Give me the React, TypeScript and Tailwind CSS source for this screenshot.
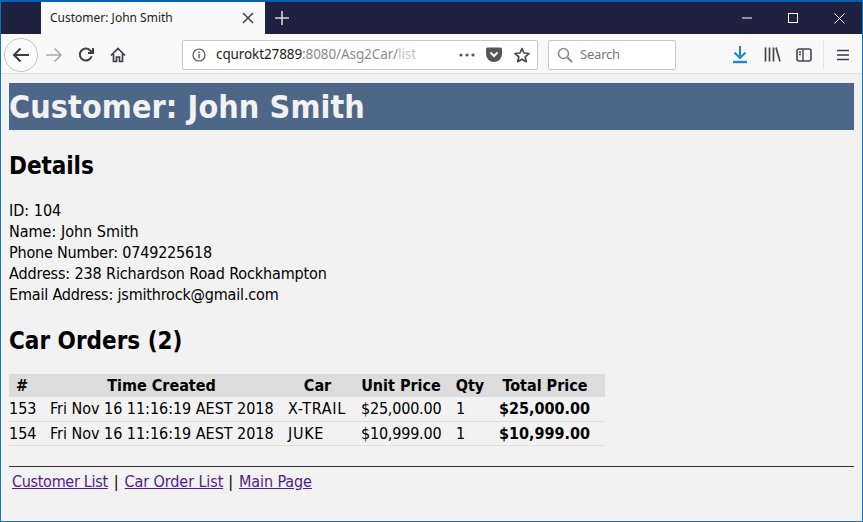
import React from "react";

const uiFont = "font-['Noto_Sans','Open_Sans',sans-serif]";

function Icon({ children, className = "", w = 20, h = 20 }: { children: React.ReactNode; className?: string; w?: number; h?: number }) {
  return (
    <svg width={w} height={h} viewBox={`0 0 ${w} ${h}`} fill="none" stroke="currentColor" strokeWidth={2} className={className}>
      {children}
    </svg>
  );
}

const rows = [
  ["153", "Fri Nov 16 11:16:19 AEST 2018", "X-TRAIL", "$25,000.00", "1", "$25,000.00"],
  ["154", "Fri Nov 16 11:16:19 AEST 2018", "JUKE", "$10,999.00", "1", "$10,999.00"],
];

export default function App() {
  return (
    <div className="w-[863px] h-[522px] overflow-hidden flex flex-col bg-[#f2f2f2] border-x border-b border-t-2 border-x-[#1473b8] border-b-[#2f7296] border-t-[#0b5fb0]">
      {/* title bar */}
      <div className="h-[32px] shrink-0 bg-[#1e2140] flex items-stretch text-white">
        <div className="w-[40px]" />
        <div className={`w-[224px] bg-[#f9f9fa] flex items-center pl-[9px] pr-[10px] text-[#222] text-[12px] ${uiFont}`}>
          <span className="flex-1">Customer: John Smith</span>
          <Icon w={12} h={12} className="text-[#444] -translate-x-px">
            <path d="M1 1L11 11M11 1L1 11" strokeWidth={1.6} />
          </Icon>
        </div>
        <div className="w-[34px] flex items-center justify-center text-[#d5d5dc]">
          <Icon w={14} h={14}>
            <path d="M7 0V14M0 7H14" strokeWidth={1.6} />
          </Icon>
        </div>
        <div className="flex-1" />
        <div className="flex items-center justify-center w-[46px] text-white">
          <Icon w={10} h={10}><path d="M0 5H10" strokeWidth={1} /></Icon>
        </div>
        <div className="flex items-center justify-center w-[46px] text-white">
          <Icon w={10} h={10}><rect x="0.5" y="0.5" width="9" height="9" strokeWidth={1} /></Icon>
        </div>
        <div className="flex items-center justify-center w-[46px] text-white">
          <Icon w={11} h={11}><path d="M0.5 0.5L10.5 10.5M10.5 0.5L0.5 10.5" strokeWidth={1} /></Icon>
        </div>
      </div>

      {/* toolbar */}
      <div className={`h-[40px] shrink-0 pt-[2px] bg-[#f9f9fa] border-b border-[#e0e0e1] flex items-center ${uiFont}`}>
        <div className="ml-[3px] w-[34px] h-[34px] rounded-full border border-[#c4c4c4] bg-[#fbfbfb] flex items-center justify-center text-[#3d3d40]">
          <Icon w={18} h={16}><path d="M17 8H2M8.5 1.5L2 8L8.5 14.5" /></Icon>
        </div>
        <div className="ml-[7px] text-[#a8a8ab]">
          <Icon w={18} h={16}><path d="M1 8H16M9.5 1.5L16 8L9.5 14.5" strokeWidth={1.6} /></Icon>
        </div>
        <div className="ml-[15px] text-[#3d3d40]">
          <Icon w={16} h={16}><path d="M13.6 9.2A6 6 0 1 1 12 3.2L14.5 5.5M15 1V6H10" /></Icon>
        </div>
        <div className="ml-[16px] text-[#3d3d40]">
          <Icon w={16} h={16}><path d="M1 8.5L8 1.5L15 8.5M3.5 7V14.5H6.5V10H9.5V14.5H12.5V7" strokeWidth={1.7} /></Icon>
        </div>
        <div className="ml-[56px] w-[356px] h-[30px] bg-white border border-[#c9c9cb] rounded-[2px] flex items-center pl-[9px] pr-[7px]">
          <Icon w={14} h={14} className="text-[#55555a]">
            <circle cx="7" cy="7" r="6" strokeWidth={1.2} />
            <path d="M7 6V10.5M7 3.5V5" strokeWidth={1.4} />
          </Icon>
          <span className="ml-[10px] w-[205px] overflow-hidden whitespace-nowrap text-[13.5px] text-[#1d1d20] tracking-[-0.1px]">
            cqurokt27889<span className="text-[#8a8a8f]">:8080/Asg2Car/</span><span className="text-[#c4c4c8]">list</span>
          </span>
          <div className="ml-[38px] text-[#55555a]">
            <Icon w={16} h={4}>
              <circle cx="2" cy="2" r="1.6" fill="currentColor" stroke="none" />
              <circle cx="8" cy="2" r="1.6" fill="currentColor" stroke="none" />
              <circle cx="14" cy="2" r="1.6" fill="currentColor" stroke="none" />
            </Icon>
          </div>
          <div className="ml-[11px] text-[#55555a]">
            <svg width="16" height="15" viewBox="0 0 16 15">
              <path d="M1.5 0.5H14.5A1.5 1.5 0 0 1 16 2V7A8 8 0 0 1 0 7V2A1.5 1.5 0 0 1 1.5 0.5Z" fill="currentColor" />
              <path d="M4.5 5.5L8 9L11.5 5.5" fill="none" stroke="white" strokeWidth={2} />
            </svg>
          </div>
          <div className="ml-[12px] text-[#47474b]">
            <Icon w={16} h={16}><path d="M8 1.5L10 6L15 6.5L11.2 9.8L12.3 14.7L8 12.2L3.7 14.7L4.8 9.8L1 6.5L6 6Z" strokeWidth={1.7} strokeLinejoin="round" /></Icon>
          </div>
        </div>
        <div className="ml-[10px] w-[128px] h-[30px] bg-white border border-[#c9c9cb] rounded-[2px] flex items-center pl-[8px]">
          <Icon w={16} h={16} className="text-[#8a8a8f]">
            <circle cx="6.5" cy="6.5" r="5" strokeWidth={1.6} />
            <path d="M10.5 10.5L15 15" strokeWidth={2} />
          </Icon>
          <span className="ml-[7px] text-[13px] text-[#77777b] tracking-[-0.2px]">Search</span>
        </div>
        <div className="ml-[56px] text-[#1b87d6]">
          <Icon w={16} h={18}><path d="M8 0V11M2.5 6.5L8 12L13.5 6.5" /><path d="M1 16H15" strokeWidth={2.4} /></Icon>
        </div>
        <div className="ml-[16px] text-[#47474b]">
          <Icon w={17} h={15}><path d="M1.5 0.5V14.5M5.5 0.5V14.5M9.5 0.5V14.5M12 0.5L16 14.5" strokeWidth={1.7} /></Icon>
        </div>
        <div className="ml-[15px] text-[#47474b]">
          <Icon w={16} h={14}>
            <rect x="1" y="1" width="14" height="12" rx="2" strokeWidth={1.6} />
            <path d="M7 1V13M3 4H5M3 6.5H5" strokeWidth={1.4} />
          </Icon>
        </div>
        <div className="ml-[11px] w-px h-[28px] bg-[#e3e3e4]" />
        <div className="ml-[13px] text-[#3d3d40]">
          <Icon w={12} h={12}><path d="M0 1.5H12M0 6H12M0 10.5H12" strokeWidth={1.6} /></Icon>
        </div>
      </div>

      {/* page */}
      <main className="flex-1 pl-[8px] pr-[8px] pt-[9px] text-black text-[16px] leading-[21px] font-['DejaVu_Sans_Condensed','Noto_Sans',sans-serif]">
        <h1 className="h-[47px] bg-[#4e6788] text-[#f2f2f2] text-[32px] leading-[49px] tracking-[0.1px] font-bold">Customer: John Smith</h1>
        <h2 className="mt-[21px] text-[24px] leading-[30px] tracking-[-0.05px] font-bold">Details</h2>
        <div className="mt-[19px]">
          <div>ID: 104</div>
          <div>Name: John Smith</div>
          <div className="tracking-[-0.2px]">Phone Number: 0749225618</div>
          <div className="tracking-[-0.13px]">Address: 238 Richardson Road Rockhampton</div>
          <div className="tracking-[-0.18px]">Email Address: jsmithrock@gmail.com</div>
        </div>
        <h2 className="mt-[21px] text-[24px] leading-[30px] font-bold">Car Orders (2)</h2>
        <table className="mt-[18px] w-[596px] table-fixed border-collapse">
          <thead>
            <tr className="h-[23px] bg-[#dcdcdc] font-bold">
              <th className="w-[33px] pr-[7px]">#</th>
              <th className="w-[239px]">Time Created</th>
              <th className="w-[73px]">Car</th>
              <th className="w-[94px]">Unit Price</th>
              <th className="w-[44px]">Qty</th>
              <th className="pr-[7px]">Total Price</th>
            </tr>
          </thead>
          <tbody>
            {rows.map((r) => (
              <tr key={r[0]} className="h-[24px] border-b border-[#dedede]">
                <td>{r[0]}</td>
                <td className="pl-[8px] tracking-[-0.03px]">{r[1]}</td>
                <td className="pl-[7px] tracking-[0.7px]">{r[2]}</td>
                <td className="pl-[7px] tracking-[-0.2px]">{r[3]}</td>
                <td className="pl-[8px]">{r[4]}</td>
                <td className="pl-[7px] font-bold">{r[5]}</td>
              </tr>
            ))}
          </tbody>
        </table>
        <hr className="mt-[20px] border-[#333]" />
        <div className="mt-[4px] pl-[3px] flex">
          <a href="#" className="underline text-[#551a8b] tracking-[-0.3px]">Customer List</a>
          <span className="ml-[6px]">|</span>
          <a href="#" className="ml-[6px] underline text-[#551a8b] tracking-[-0.1px]">Car Order List</a>
          <span className="ml-[5px]">|</span>
          <a href="#" className="ml-[6px] underline text-[#551a8b] tracking-[-0.1px]">Main Page</a>
        </div>
      </main>
    </div>
  );
}
